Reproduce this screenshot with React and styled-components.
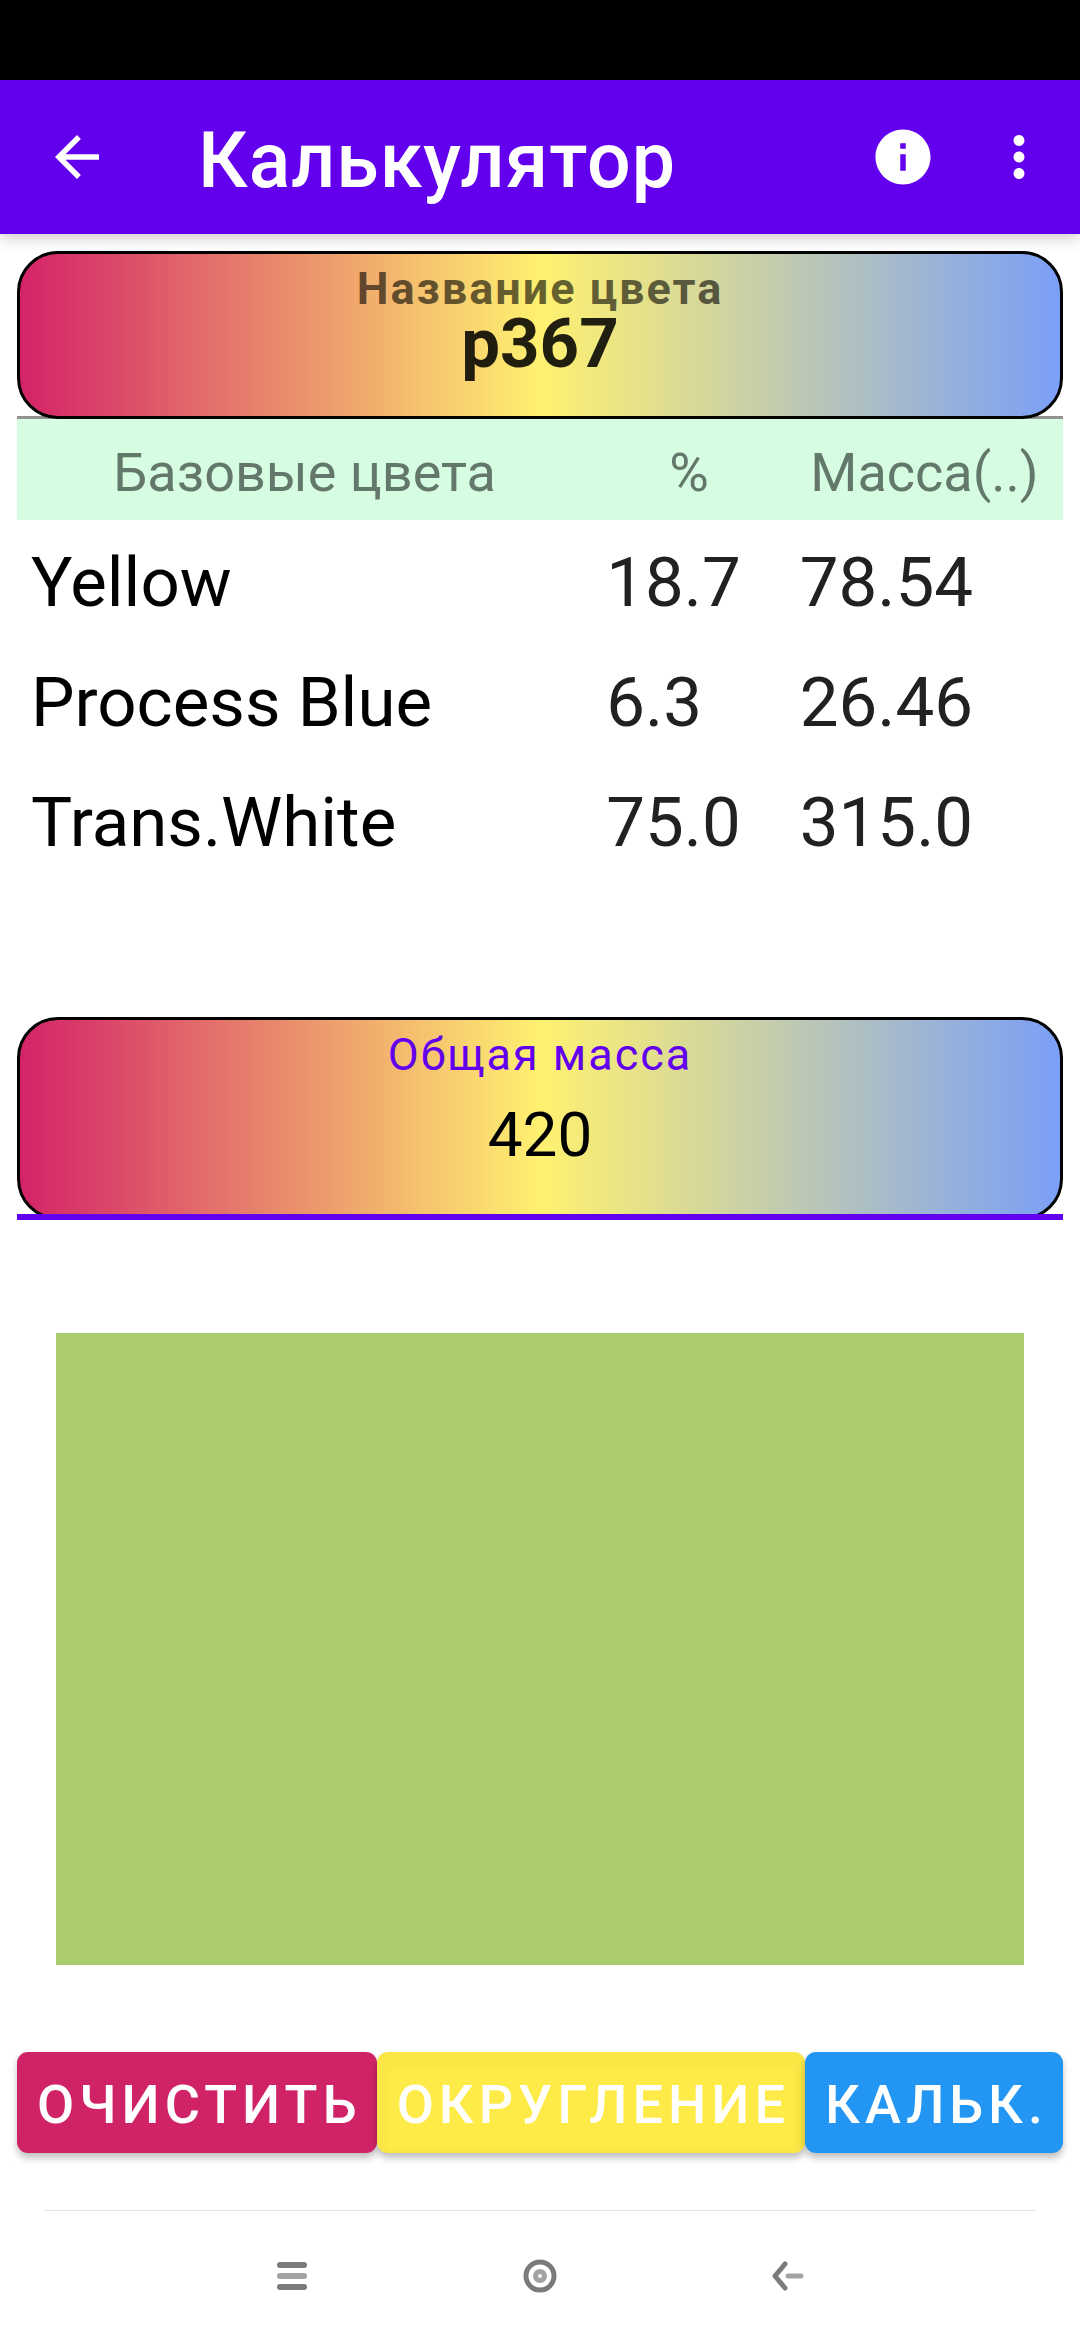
import React, { useState } from "react";
import styled, { createGlobalStyle } from "styled-components";

const GlobalStyle = createGlobalStyle`
  *, *::before, *::after { box-sizing: border-box; }
  html, body { margin: 0; background: #fff; }
  body { font-family: Roboto, "Noto Sans", sans-serif; }
  button, input { font-family: inherit; }
`;

const Screen = styled.div`
  display: flex;
  flex-direction: column;
  min-height: 100vh;
`;

const StatusBar = styled.div`
  height: 80px;
  background: #000;
`;

const AppBar = styled.header`
  display: flex;
  align-items: center;
  height: 154px;
  padding: 0 11px 0 0;
  background: #6200ee;
  color: #fff;
  box-shadow: 0 4px 14px rgba(0, 0, 0, 0.2);
`;

const IconButton = styled.button`
  display: grid;
  place-items: center;
  flex: none;
  width: ${(p) => p.$width}px;
  height: 154px;
  padding: 0;
  border: 0;
  background: none;
  color: inherit;
`;

const Title = styled.h1`
  flex: 1;
  margin: 0;
  padding: 8px 0 0 44px;
  font-size: 77px;
  font-weight: 500;
  line-height: 90px;
  letter-spacing: 1px;
`;

const Content = styled.main`
  flex: 1;
  display: flex;
  flex-direction: column;
  padding: 17px 17px 57px;
`;

const Field = styled.div`
  box-shadow: inset 0 -3px #929292;
`;

const FieldBox = styled.div`
  display: flex;
  flex-direction: column;
  align-items: center;
  height: ${(p) => p.$height}px;
  padding-top: 20px;
  border: 3px solid #000;
  border-radius: 41px;
  background: linear-gradient(90deg, #d32268, #fff170 50%, #7a9ff8) border-box;
`;

const FieldLabel = styled.label`
  font-size: 45px;
  line-height: 30px;
  letter-spacing: 2px;
  font-weight: ${(p) => (p.$bold ? 700 : 400)};
  color: ${(p) => (p.$bold ? "rgba(0, 0, 0, 0.6)" : "#6200ee")};
`;

const FieldInput = styled.input`
  width: 100%;
  height: ${(p) => p.$height}px;
  padding: 0;
  border: 0;
  outline: 0;
  background: none;
  text-align: center;
  font-size: ${(p) => p.$size}px;
  font-weight: ${(p) => (p.$bold ? 700 : 400)};
  color: ${(p) => (p.$bold ? "rgba(0, 0, 0, 0.87)" : "#000")};
`;

const TotalField = styled.div`
  margin-top: 134px;
`;

const FocusLine = styled.div`
  position: relative;
  height: 6px;
  margin-top: -6px;
  background: #6200ee;
`;

const Table = styled.table`
  width: 100%;
  table-layout: fixed;
  border-collapse: collapse;
`;

const HeadCell = styled.th`
  width: ${(p) => p.$width};
  height: 101px;
  padding: 6px 0 0;
  background: #d6fde2;
  color: #63786a;
  font-size: 54px;
  font-weight: 400;
  line-height: 60px;
`;

const Body = styled.tbody`
  &::before {
    content: "";
    display: block;
    height: 3px;
  }
`;

const Cell = styled.td`
  height: 120px;
  padding: 0 14px;
  color: #212121;
  font-size: 69px;
  line-height: 80px;
  white-space: nowrap;
`;

const NameCell = styled(Cell)`
  color: #000;
`;

const Swatch = styled.div`
  height: 632px;
  margin: 113px 39px 87px;
  background: #aacc6d;
`;

const Actions = styled.div`
  display: flex;
`;

const ActionButton = styled.button`
  flex: 1 1 auto;
  height: 101px;
  padding: 5px 14px 0 19px;
  border: 0;
  border-radius: 11px;
  background: ${(p) => p.$color};
  color: #fff;
  font-size: 54px;
  font-weight: 500;
  line-height: 64px;
  letter-spacing: 5px;
  box-shadow: 0 5px 7px rgba(0, 0, 0, 0.25)
    ${(p) => p.$shaded && ", inset 0 7px 1px 11px rgba(0, 0, 0, 0.02)"};
`;

const SystemNav = styled.nav`
  display: flex;
  justify-content: center;
  height: 130px;
  margin: 0 44px;
  border-top: 1px solid #e3e3e3;
`;

const NavButton = styled.button`
  display: grid;
  place-items: center;
  width: 248px;
  padding: 0;
  border: 0;
  background: none;
`;

const ingredients = [
  { name: "Yellow", percent: "18.7", mass: "78.54" },
  { name: "Process Blue", percent: "6.3", mass: "26.46" },
  { name: "Trans.White", percent: "75.0", mass: "315.0" },
];

const MaterialIcon = ({ d }) => (
  <svg width="66" height="66" viewBox="0 0 24 24" fill="currentColor" aria-hidden="true">
    <path d={d} />
  </svg>
);

export default function App() {
  const [name, setName] = useState("p367");
  const [total, setTotal] = useState("420");

  return (
    <Screen>
      <GlobalStyle />
      <StatusBar />
      <AppBar>
        <IconButton $width={154} aria-label="Назад">
          <MaterialIcon d="M20 11H7.83l5.59-5.59L12 4l-8 8 8 8 1.41-1.41L7.83 13H20v-2z" />
        </IconButton>
        <Title>Калькулятор</Title>
        <IconButton $width={132} aria-label="Информация">
          <MaterialIcon d="M12 2C6.48 2 2 6.48 2 12s4.48 10 10 10 10-4.48 10-10S17.52 2 12 2zm1 15h-2v-6h2v6zm0-8h-2V7h2v2z" />
        </IconButton>
        <IconButton $width={100} aria-label="Ещё">
          <MaterialIcon d="M12 8c1.1 0 2-.9 2-2s-.9-2-2-2-2 .9-2 2 .9 2 2 2zm0 2c-1.1 0-2 .9-2 2s.9 2 2 2 2-.9 2-2-.9-2-2-2zm0 6c-1.1 0-2 .9-2 2s.9 2 2 2 2-.9 2-2-.9-2-2-2z" />
        </IconButton>
      </AppBar>

      <Content>
        <Field>
          <FieldBox $height={168}>
            <FieldLabel htmlFor="name" $bold>Название цвета</FieldLabel>
            <FieldInput id="name" $height={78} $size={69} $bold value={name} onChange={(e) => setName(e.target.value)} />
          </FieldBox>
        </Field>

        <Table>
          <thead>
            <tr>
              <HeadCell $width="55%">Базовые цвета</HeadCell>
              <HeadCell $width="18.5%">%</HeadCell>
              <HeadCell $width="26.5%">Масса(..)</HeadCell>
            </tr>
          </thead>
          <Body>
            {ingredients.map((row) => (
              <tr key={row.name}>
                <NameCell>{row.name}</NameCell>
                <Cell>{row.percent}</Cell>
                <Cell>{row.mass}</Cell>
              </tr>
            ))}
          </Body>
        </Table>

        <TotalField>
          <FieldBox $height={203}>
            <FieldLabel htmlFor="total">Общая масса</FieldLabel>
            <FieldInput id="total" $height={128} $size={62} value={total} onChange={(e) => setTotal(e.target.value)} />
          </FieldBox>
          <FocusLine />
        </TotalField>

        <Swatch />

        <Actions>
          <ActionButton $color="#d02367">ОЧИСТИТЬ</ActionButton>
          <ActionButton $color="#ffeb47" $shaded>ОКРУГЛЕНИЕ</ActionButton>
          <ActionButton $color="#2396f3">КАЛЬК.</ActionButton>
        </Actions>
      </Content>

      <SystemNav>
        <NavButton aria-label="Недавние">
          <svg width="36" height="36" viewBox="0 0 36 36" strokeWidth="6" strokeLinecap="round" aria-hidden="true">
            <path d="M6 7h24M6 29h24" stroke="#7b7b7b" />
            <path d="M6 18h24" stroke="#a3a3a3" />
          </svg>
        </NavButton>
        <NavButton aria-label="Домой">
          <svg width="36" height="36" viewBox="0 0 36 36" fill="none" aria-hidden="true">
            <circle cx="18" cy="18" r="14" stroke="#7b7b7b" strokeWidth="5" />
            <circle cx="18" cy="18" r="4.5" stroke="#a3a3a3" strokeWidth="5" />
          </svg>
        </NavButton>
        <NavButton aria-label="Назад">
          <svg width="36" height="36" viewBox="0 0 36 36" fill="none" strokeLinecap="round" strokeLinejoin="round" aria-hidden="true">
            <path d="M18 18h13" stroke="#a3a3a3" strokeWidth="5" />
            <path d="M15 6L5 18l10 12" stroke="#7b7b7b" strokeWidth="5" />
          </svg>
        </NavButton>
      </SystemNav>
    </Screen>
  );
}
